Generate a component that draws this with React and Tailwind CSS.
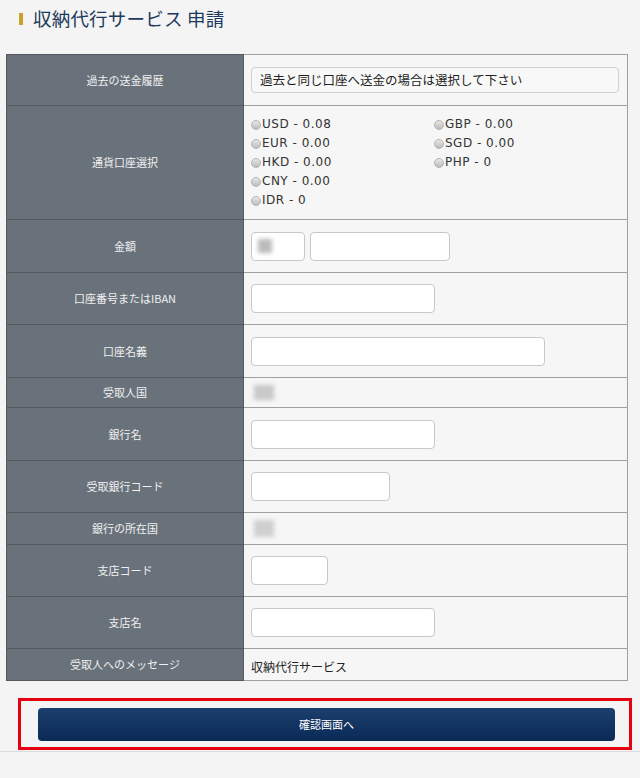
import React from 'react';

const jp = { fontFamily: '"Noto Sans CJK JP", "Noto Sans", sans-serif' };
const verdana = { fontFamily: '"DejaVu Sans", Verdana, sans-serif' };

const Field = ({ w }) => (
  <div className={`${w} h-[29px] bg-white border border-[#c8c8c8] rounded-[4px]`} />
);

const Radio = ({ label }) => (
  <div className="flex items-center h-[19px] text-[12px] tracking-[0.5px] text-[#333]" style={verdana}>
    <span className="inline-block w-[10px] h-[10px] rounded-full border border-[#b5b5b5] bg-gradient-to-b from-[#e8e8e8] to-[#bcbcbc] mr-[1px] mt-[2px]" />
    {label}
  </div>
);

const rows = [
  { label: '過去の送金履歴', h: 'h-[51px]', cell: (
    <div className="w-[368px] h-[26px] bg-[#f8f8f8] border border-[#cfcfcf] rounded-[4px] flex items-center pl-[8px] text-[12.5px] text-[#222]">
      過去と同じ口座へ送金の場合は選択して下さい
    </div>
  ) },
  { label: '通貨口座選択', h: 'h-[114px]', cell: (
    <div className="grid grid-cols-[183px_1fr] -mt-[2px]">
      <div>
        <Radio label="USD - 0.08" />
        <Radio label="EUR - 0.00" />
        <Radio label="HKD - 0.00" />
        <Radio label="CNY - 0.00" />
        <Radio label="IDR - 0" />
      </div>
      <div>
        <Radio label="GBP - 0.00" />
        <Radio label="SGD - 0.00" />
        <Radio label="PHP - 0" />
      </div>
    </div>
  ) },
  { label: '金額', h: 'h-[53px]', cell: (
    <div className="flex gap-[5px]">
      <div className="w-[54px] h-[29px] bg-white border border-[#c8c8c8] rounded-[4px] flex items-center pl-[6px]">
        <div className="w-[14px] h-[14px] bg-[#bbb] blur-[2px]" />
      </div>
      <Field w="w-[140px]" />
    </div>
  ) },
  { label: '口座番号またはIBAN', h: 'h-[52px]', cell: <Field w="w-[184px]" /> },
  { label: '口座名義', h: 'h-[53px]', cell: <Field w="w-[294px]" /> },
  { label: '受取人国', h: 'h-[30px]', cell: (
    <div className="w-[20px] h-[15px] bg-[#c8c8c8] blur-[2px] ml-[3px]" />
  ) },
  { label: '銀行名', h: 'h-[53px]', cell: <Field w="w-[184px]" /> },
  { label: '受取銀行コード', h: 'h-[52px]', cell: <Field w="w-[139px]" /> },
  { label: '銀行の所在国', h: 'h-[32px]', cell: (
    <div className="w-[20px] h-[17px] bg-[#cfcfcf] blur-[2px] ml-[3px]" />
  ) },
  { label: '支店コード', h: 'h-[52px]', cell: <Field w="w-[77px]" /> },
  { label: '支店名', h: 'h-[52px]', cell: <Field w="w-[184px]" /> },
  { label: '受取人へのメッセージ', h: 'h-[32px]', cell: (
    <span className="text-[12px] text-[#222]">収納代行サービス</span>
  ) },
];

export default function App() {
  return (
    <div className="w-[640px] h-[778px] bg-[#f4f4f4] overflow-hidden" style={jp}>
      <div className="flex items-center pl-[19px] h-[38px]">
        <span className="w-[4px] h-[12px] bg-[#c9a227] mr-[10px]" />
        <h1 className="text-[18.5px] text-[#1b3a5c] tracking-[0.2px]">収納代行サービス 申請</h1>
      </div>

      <div className="pl-[6px] pt-[16px]">
        <table className="w-[622px] border-collapse border border-[#8f9295]">
          <tbody>
            {rows.map((r) => (
              <tr key={r.label} className={r.h}>
                <td className="w-[237px] p-0 bg-[#69727b] border border-[#555b61] text-center text-[11px] text-[#f0f0f0]">
                  {r.label}
                </td>
                <td className="p-0 pl-[7px] bg-[#f6f6f6] border border-[#a0a0a0] align-middle">
                  {r.cell}
                </td>
              </tr>
            ))}
          </tbody>
        </table>
      </div>

      <div className="mt-[17px] ml-[18px] w-[614px] h-[52px] border-[3px] border-[#e60012] pt-[7px] pl-[17px]">
        <button className="w-[577px] h-[33px] rounded-[4px] bg-gradient-to-b from-[#1c3f6e] to-[#0a2a56] text-white text-[11px]">
          確認画面へ
        </button>
      </div>
      <div className="mt-[1px] h-[1px] bg-[#dcdcdc]" />
    </div>
  );
}
